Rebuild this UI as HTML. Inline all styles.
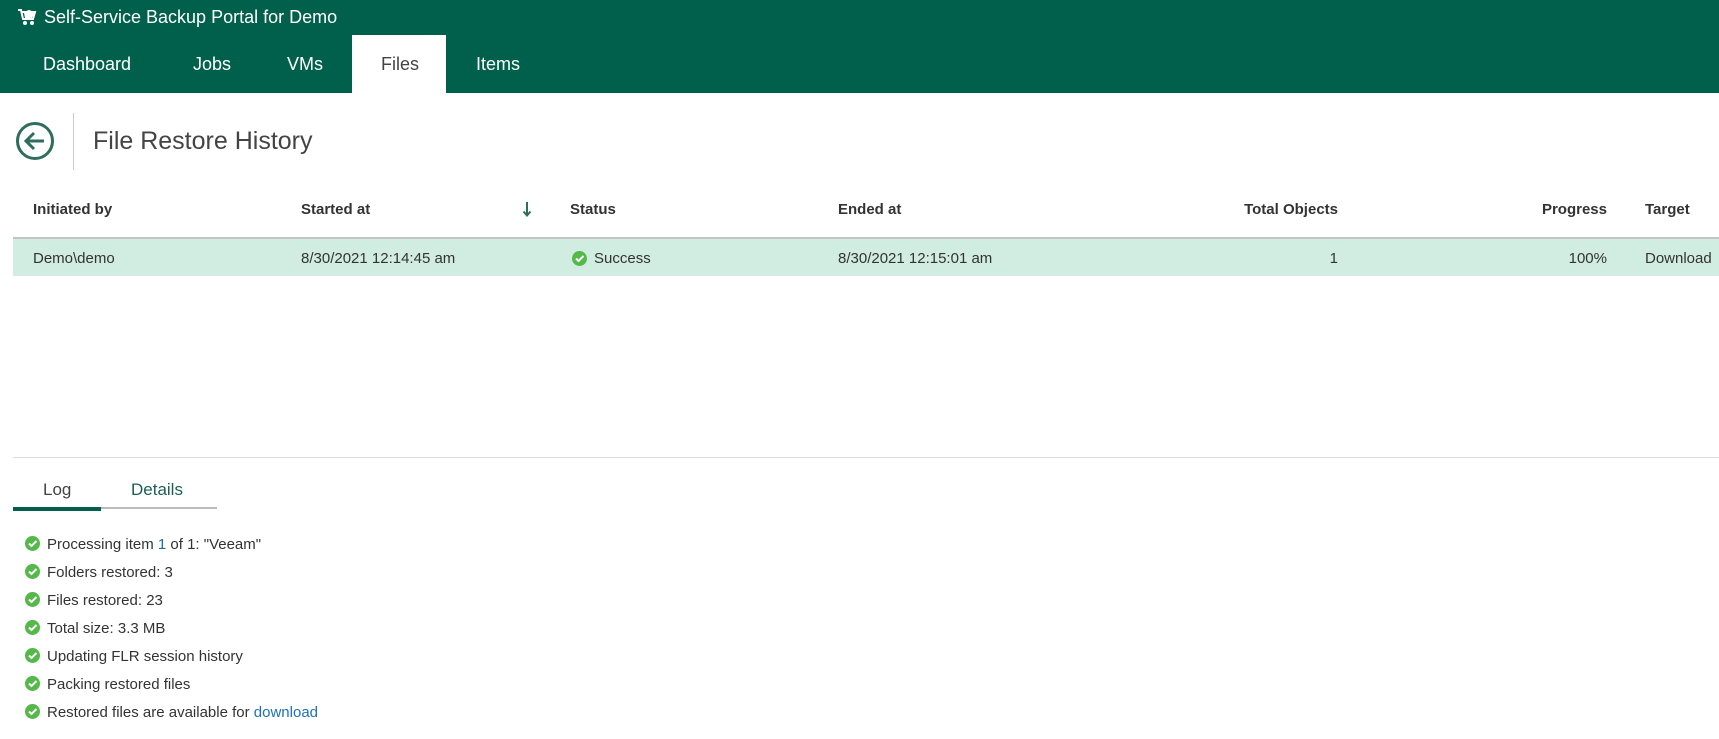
<!DOCTYPE html>
<html><head><style>
*{margin:0;padding:0;box-sizing:border-box}
body{width:1719px;height:739px;overflow:hidden;background:#fff;font-family:"Liberation Sans",sans-serif;color:#333;position:relative}
.a{position:absolute;white-space:nowrap}
.top{position:absolute;left:0;top:0;width:1719px;height:93px;background:#00604b}
.nav{color:#fff;font-size:18px;top:54px}
.th{font-weight:bold;font-size:15px;top:201px}
.td{font-size:15px;top:250px}
.log{font-size:15px;left:47px}
.ic{position:absolute;width:15px;height:15px;border-radius:50%;background:#54b948}
.ic svg{position:absolute;left:0;top:0}
</style></head><body>
<div class="top"></div>
<svg class="a" style="left:17px;top:7px" width="20" height="20" viewBox="0 0 20 20"><path d="M1 3h3l2 9h10l2-7H5" fill="none" stroke="#fff" stroke-width="2"/><path d="M7 6h10l-2 5H8z" fill="#fff"/><circle cx="8" cy="16" r="2" fill="#fff"/><circle cx="15" cy="16" r="2" fill="#fff"/><path d="M8 6q4-6 8 0" fill="#fff"/></svg>
<div class="a" style="left:44px;top:7px;color:#fff;font-size:18px">Self-Service Backup Portal for Demo</div>
<div class="a" style="left:352px;top:35px;width:94px;height:58px;background:#fff"></div>
<div class="a nav" style="left:43px">Dashboard</div>
<div class="a nav" style="left:193px">Jobs</div>
<div class="a nav" style="left:287px">VMs</div>
<div class="a nav" style="left:381px;color:#444">Files</div>
<div class="a nav" style="left:476px">Items</div>
<svg class="a" style="left:15px;top:121px" width="40" height="40" viewBox="0 0 40 40"><circle cx="20" cy="20" r="17.5" fill="none" stroke="#2e6e5a" stroke-width="3"/><path d="M29 20H12M19 12l-8 8 8 8" fill="none" stroke="#2e6e5a" stroke-width="3"/></svg>
<div class="a" style="left:73px;top:113px;width:1px;height:57px;background:#ccc"></div>
<div class="a" style="left:93px;top:127px;font-size:25px;color:#444">File Restore History</div>
<div class="a th" style="left:33px">Initiated by</div>
<div class="a th" style="left:301px">Started at</div>
<svg class="a" style="left:522px;top:201px" width="10" height="16" viewBox="0 0 10 16"><path d="M5 1v13M1.5 10.5L5 14.5 8.5 10.5" fill="none" stroke="#2e6e5a" stroke-width="2"/></svg>
<div class="a th" style="left:570px">Status</div>
<div class="a th" style="left:838px">Ended at</div>
<div class="a th" style="left:1238px;width:100px;text-align:right">Total Objects</div>
<div class="a th" style="left:1507px;width:100px;text-align:right">Progress</div>
<div class="a th" style="left:1645px">Target</div>
<div class="a" style="left:13px;top:237px;width:1706px;height:2px;background:#c4c4c4"></div>
<div class="a" style="left:13px;top:239px;width:1706px;height:37px;background:#d1ece1"></div>
<div class="a td" style="left:33px">Demo\demo</div>
<div class="a td" style="left:301px">8/30/2021 12:14:45 am</div>
<div class="ic" style="left:572px;top:251px"><svg width="15" height="15"><path d="M4 7.5l2.5 2.5 5-5" fill="none" stroke="#fff" stroke-width="2"/></svg></div>
<div class="a td" style="left:594px">Success</div>
<div class="a td" style="left:838px">8/30/2021 12:15:01 am</div>
<div class="a td" style="left:1238px;width:100px;text-align:right">1</div>
<div class="a td" style="left:1507px;width:100px;text-align:right">100%</div>
<div class="a td" style="left:1645px">Download</div>
<div class="a" style="left:13px;top:457px;width:1706px;height:1px;background:#ddd"></div>
<div class="a" style="left:43px;top:480px;font-size:17px;color:#444">Log</div>
<div class="a" style="left:131px;top:480px;font-size:17px;color:#1d5f55">Details</div>
<div class="a" style="left:13px;top:507px;width:88px;height:4px;background:#00604b"></div>
<div class="a" style="left:101px;top:507px;width:116px;height:2px;background:#bbb"></div>

<div class="ic" style="left:25px;top:536px"><svg width="15" height="15"><path d="M4 7.5l2.5 2.5 5-5" fill="none" stroke="#fff" stroke-width="2"/></svg></div>
<div class="a log" style="top:536px">Processing item <span style="color:#1a6ca8">1</span> of 1: "Veeam"</div>
<div class="ic" style="left:25px;top:564px"><svg width="15" height="15"><path d="M4 7.5l2.5 2.5 5-5" fill="none" stroke="#fff" stroke-width="2"/></svg></div>
<div class="a log" style="top:564px">Folders restored: 3</div>
<div class="ic" style="left:25px;top:592px"><svg width="15" height="15"><path d="M4 7.5l2.5 2.5 5-5" fill="none" stroke="#fff" stroke-width="2"/></svg></div>
<div class="a log" style="top:592px">Files restored: 23</div>
<div class="ic" style="left:25px;top:620px"><svg width="15" height="15"><path d="M4 7.5l2.5 2.5 5-5" fill="none" stroke="#fff" stroke-width="2"/></svg></div>
<div class="a log" style="top:620px">Total size: 3.3 MB</div>
<div class="ic" style="left:25px;top:648px"><svg width="15" height="15"><path d="M4 7.5l2.5 2.5 5-5" fill="none" stroke="#fff" stroke-width="2"/></svg></div>
<div class="a log" style="top:648px">Updating FLR session history</div>
<div class="ic" style="left:25px;top:676px"><svg width="15" height="15"><path d="M4 7.5l2.5 2.5 5-5" fill="none" stroke="#fff" stroke-width="2"/></svg></div>
<div class="a log" style="top:676px">Packing restored files</div>
<div class="ic" style="left:25px;top:704px"><svg width="15" height="15"><path d="M4 7.5l2.5 2.5 5-5" fill="none" stroke="#fff" stroke-width="2"/></svg></div>
<div class="a log" style="top:704px">Restored files are available for <span style="color:#1a73b8">download</span></div>
</body></html>
